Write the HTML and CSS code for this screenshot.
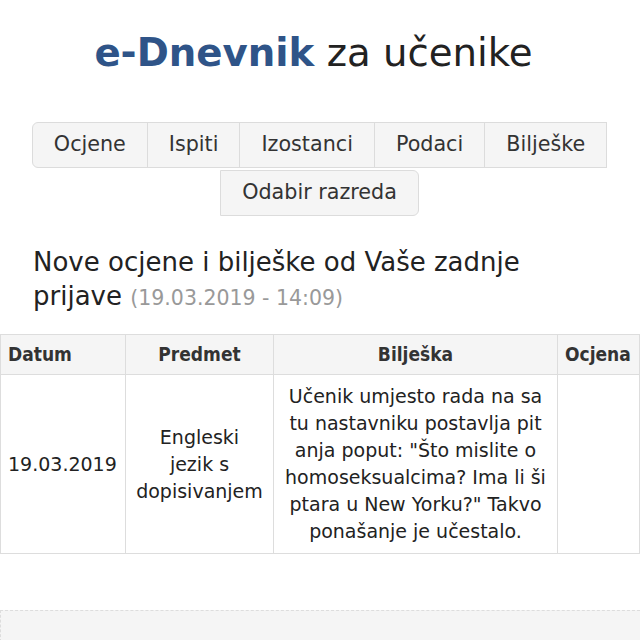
FILE: index.html
```html
<!DOCTYPE html>
<html lang="hr">

<head>
    <meta charset="UTF-8">
    <meta name="viewport" content="width=device-width, initial-scale=1.0">
    <title>e-Dnevnik za učenike</title>
    <link rel="stylesheet" href="styles.css">
</head>

<body>
    <h1 class="title"><span class="brand">e-Dnevnik</span> za učenike</h1>

    <div class="nav">
        <a class="nav-btn first">Ocjene</a>
        <a class="nav-btn">Ispiti</a>
        <a class="nav-btn">Izostanci</a>
        <a class="nav-btn">Podaci</a>
        <a class="nav-btn">Bilješke</a>
        <a class="nav-btn last">Odabir razreda</a>
    </div>

    <h2 class="section-title"><span>Nove ocjene i bilješke od Vaše zadnje</span> <span>prijave</span> <small class="last-login">(19.03.2019 - 14:09)</small></h2>

    <table class="grades">
        <colgroup>
            <col class="col-date">
            <col class="col-subject">
            <col class="col-note">
            <col class="col-grade">
        </colgroup>
        <thead>
            <tr>
                <th class="left">Datum</th>
                <th>Predmet</th>
                <th>Bilješka</th>
                <th class="left">Ocjena</th>
            </tr>
        </thead>
        <tbody>
            <tr>
                <td class="left">19.03.2019</td>
                <td>Engleski<br>jezik s<br>dopisivanjem</td>
                <td>Učenik umjesto rada na sa<br>tu nastavniku postavlja pit<br>anja poput: "Što mislite o<br>homoseksualcima? Ima li ši<br>ptara u New Yorku?" Takvo<br>ponašanje je učestalo.</td>
                <td></td>
            </tr>
        </tbody>
    </table>

    <div class="footer-box"></div>
</body>

</html>
```

FILE: styles.css
```css
body {
    font-family: "DejaVu Sans", Verdana, sans-serif;
    margin: 0;
    padding: 0;
    color: #222;
    background: #fff;
}

.title {
    text-align: center;
    font-size: 38.7px;
    font-weight: normal;
    line-height: 46px;
    margin: 30px 0 0 0;
    padding-right: 13px;
    color: #222;
}

.brand {
    color: #2f5488;
    font-weight: bold;
}

.nav {
    display: flex;
    flex-wrap: wrap;
    justify-content: center;
    row-gap: 2px;
    margin-top: 46px;
    padding: 0 20px;
}

.nav-btn {
    font-size: 20.7px;
    line-height: 25px;
    color: #333;
    background: #f5f5f5;
    border: 1px solid #dcdcdc;
    padding: 9px 21px 10px;
    margin-left: -1px;
}

.nav-btn.first {
    border-radius: 6px 0 0 6px;
}

.nav-btn.last {
    border-radius: 0 6px 6px 0;
}

.section-title {
    font-size: 26px;
    font-weight: normal;
    line-height: 34px;
    margin: 29px 0 0 0;
    padding: 0 60px 0 33px;
    color: #222;
}

.last-login {
    font-size: 20.5px;
    line-height: 1;
    color: #999;
}

.grades {
    width: 100%;
    table-layout: fixed;
    border-collapse: collapse;
    margin-top: 21px;
    font-size: 19px;
    border: 1px solid #ddd;
}

.col-date {
    width: 125px;
}

.col-subject {
    width: 148px;
}

.col-note {
    width: 284px;
}

.grades th,
.grades td {
    border: 1px solid #ddd;
    padding: 8px 7px;
    text-align: center;
    vertical-align: middle;
    line-height: 27px;
}

.grades th {
    font-family: "DejaVu Sans Condensed", "DejaVu Sans", sans-serif;
    background: #f5f5f5;
    color: #333;
    line-height: 23px;
    white-space: nowrap;
}

.grades .left {
    text-align: left;
}

.footer-box {
    margin-top: 56px;
    height: 60px;
    background: #f5f5f5;
    border-top: 1px dashed #ddd;
    border-left: 1px dashed #ddd;
}
```
